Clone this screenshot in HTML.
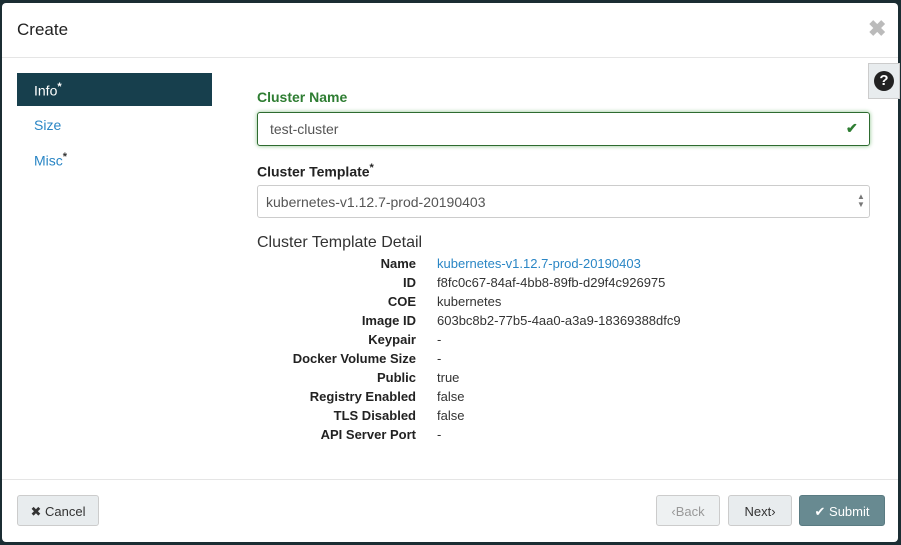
<!DOCTYPE html>
<html><head><style>
body{margin:0;width:901px;height:545px;background:#1b2d33;font-family:"Liberation Sans",sans-serif;position:relative;overflow:hidden;}
.m{position:absolute;left:2px;top:3px;width:896px;height:539px;background:#fff;border-radius:4px;}
.a{position:absolute;white-space:nowrap;}
.lab{font-weight:bold;font-size:14px;color:#222;}
.row{position:absolute;left:0;width:900px;font-size:13px;height:19px;line-height:19px;white-space:nowrap;}
.row b{position:absolute;right:486px;color:#222;}
.row span{position:absolute;left:435px;color:#333;}
.btn{position:absolute;top:492px;height:31px;border:1px solid #ccc;border-radius:3px;background:#e8ecee;font-size:13px;line-height:31px;text-align:center;color:#333;box-sizing:border-box;}
</style></head><body>
<div class="m">
<div class="a" style="left:15px;top:17px;font-size:17px;color:#222">Create</div>
<div class="a" style="left:866px;top:13px;font-size:22px;color:#bbb;font-weight:bold">✖</div>
<div class="a" style="left:0;top:54px;width:896px;height:1px;background:#e5e5e5"></div>
<div class="a" style="left:15px;top:70px;width:195px;height:33px;background:#173f4d"></div>
<div class="a" style="left:32px;top:78px;font-size:14px;color:#fff">Info<sup style="font-size:11px;font-weight:bold">*</sup></div>
<div class="a" style="left:32px;top:114px;font-size:14px;color:#2a86c5">Size</div>
<div class="a" style="left:32px;top:148px;font-size:14px;color:#2a86c5">Misc<sup style="font-size:11px;font-weight:bold;color:#333">*</sup></div>
<div class="a" style="left:866px;top:60px;width:32px;height:36px;background:#e8ecee;border:1px solid #ccc;box-sizing:border-box"></div>
<div class="a" style="left:872px;top:68px;width:20px;height:20px;border-radius:50%;background:#222;color:#fff;font-weight:bold;font-size:15px;text-align:center;line-height:20px">?</div>
<div class="a lab" style="left:255px;top:86px;color:#2e7d32">Cluster Name</div>
<div class="a" style="left:255px;top:109px;width:613px;height:34px;border:1px solid #2e6b30;border-radius:3px;box-sizing:border-box;box-shadow:0 0 4px #8bc48b"></div>
<div class="a" style="left:268px;top:118px;font-size:14px;color:#555">test-cluster</div>
<div class="a" style="left:844px;top:117px;font-size:14px;color:#2e7d32;font-weight:bold">✔</div>
<div class="a lab" style="left:255px;top:159px">Cluster Template<sup style="font-size:11px">*</sup></div>
<div class="a" style="left:255px;top:182px;width:613px;height:33px;border:1px solid #ccc;border-radius:3px;box-sizing:border-box"></div>
<div class="a" style="left:264px;top:191px;font-size:14px;color:#555">kubernetes-v1.12.7-prod-20190403</div>
<div class="a" style="left:855px;top:190px;font-size:8px;color:#777;line-height:8px">▲<br>▼</div>
<div class="a" style="left:255px;top:231px;font-size:16px;color:#333">Cluster Template Detail</div>
<div class="a" style="left:0;top:251px;width:900px">
<div class="row" style="top:0"><b>Name</b><span style="color:#2a86c5">kubernetes-v1.12.7-prod-20190403</span></div>
<div class="row" style="top:19px"><b>ID</b><span>f8fc0c67-84af-4bb8-89fb-d29f4c926975</span></div>
<div class="row" style="top:38px"><b>COE</b><span>kubernetes</span></div>
<div class="row" style="top:57px"><b>Image ID</b><span>603bc8b2-77b5-4aa0-a3a9-18369388dfc9</span></div>
<div class="row" style="top:76px"><b>Keypair</b><span>-</span></div>
<div class="row" style="top:95px"><b>Docker Volume Size</b><span>-</span></div>
<div class="row" style="top:114px"><b>Public</b><span>true</span></div>
<div class="row" style="top:133px"><b>Registry Enabled</b><span>false</span></div>
<div class="row" style="top:152px"><b>TLS Disabled</b><span>false</span></div>
<div class="row" style="top:171px"><b>API Server Port</b><span>-</span></div>
</div>
<div class="a" style="left:0;top:476px;width:896px;height:1px;background:#e5e5e5"></div>
<div class="btn" style="left:15px;width:82px">✖ Cancel</div>
<div class="btn" style="left:654px;width:64px;color:#999;background:#eef1f2">‹Back</div>
<div class="btn" style="left:726px;width:64px">Next›</div>
<div class="btn" style="left:797px;width:86px;background:#688a91;border-color:#5a7b82;color:#fff">✔ Submit</div>
</div>
</body></html>
